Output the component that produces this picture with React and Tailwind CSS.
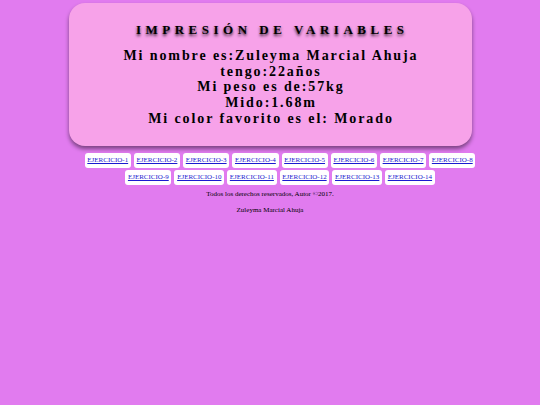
import React from 'react';

const ejercicios = Array.from({ length: 14 }, (_, i) => `EJERCICIO-${i + 1}`);

const App = () => {
  return (
    <div className="min-h-[405px] bg-[#e17bef] pt-[3px] font-['Liberation_Serif',serif] text-black">
      {/* Card */}
      <div className="mx-auto w-[403px] rounded-[16px] bg-[#f7a2e9] pt-[19px] pb-[19px] text-center shadow-[0_3px_4px_rgba(0,0,0,0.45)]">
        <h1 className="pl-[4.5px] text-[13px] font-bold leading-[16px] tracking-[4.5px] [text-shadow:0_2px_3px_rgba(0,0,0,0.8)]">
          IMPRESIÓN DE VARIABLES
        </h1>
        <div className="mt-[10px] pl-[2px] text-[14px] font-bold leading-[15.7px] tracking-[1.9px]">
          <p>Mi nombre es:Zuleyma Marcial Ahuja</p>
          <p>tengo:22años</p>
          <p>Mi peso es de:57kg</p>
          <p>Mido:1.68m</p>
          <p>Mi color favorito es el: Morado</p>
        </div>
      </div>

      {/* Links */}
      <div className="mt-[7px] flex justify-center pl-[20px]">
        <div className="flex w-[400px] flex-wrap justify-center gap-x-[3px] gap-y-[2px]">
          {ejercicios.map((e) => (
            <a
              key={e}
              href="#"
              className="rounded-[3px] bg-white px-[2.7px] py-[2px] text-[7px] leading-[11px] text-[#1a1ad0] underline"
            >
              {e}
            </a>
          ))}
        </div>
      </div>

      {/* Footer */}
      <p className="mt-[5px] text-center text-[7px] leading-[9px]">Todos los derechos reservados, Autor ©2017.</p>
      <p className="mt-[7px] text-center text-[7px] leading-[9px]">Zuleyma Marcial Ahuja</p>
    </div>
  );
};

export default App;
